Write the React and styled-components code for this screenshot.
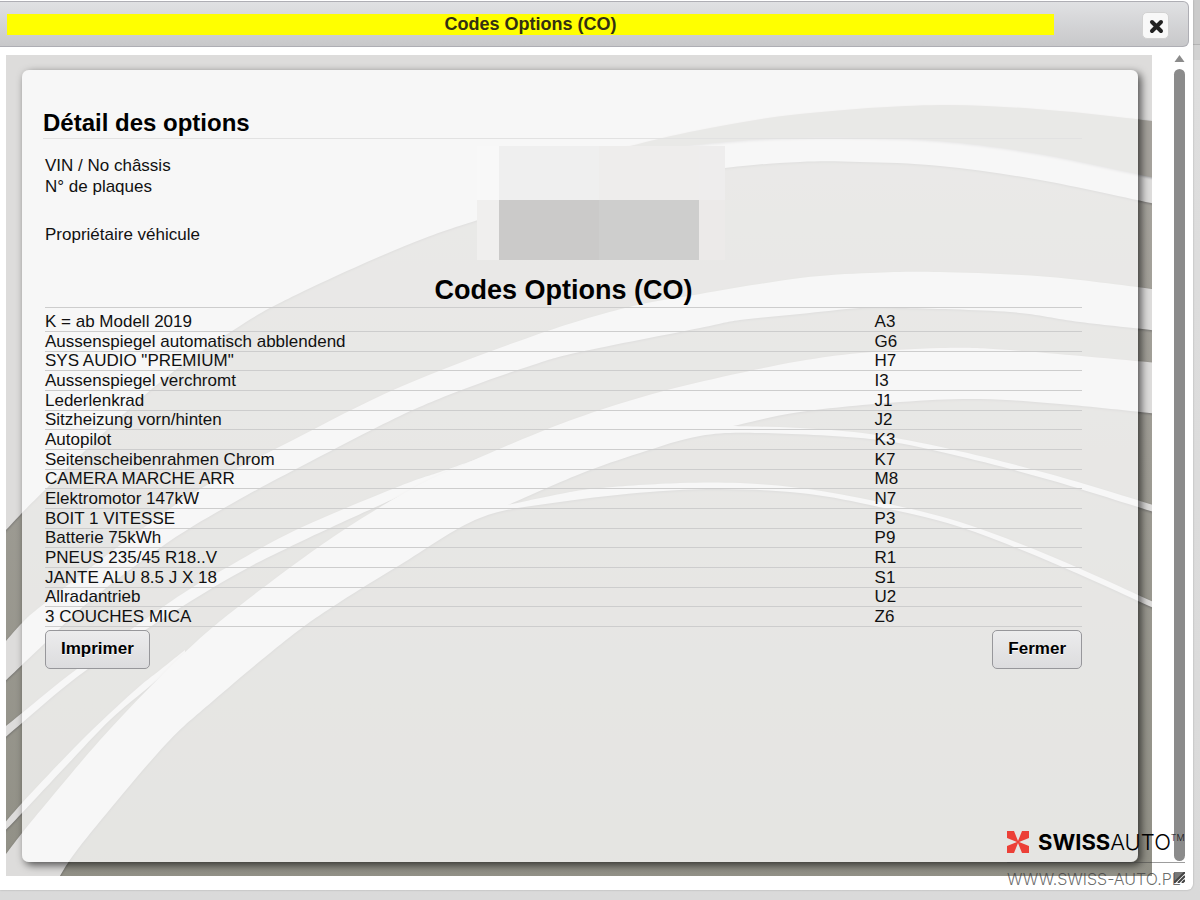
import React from 'react';
import styled, { createGlobalStyle } from 'styled-components';

const GlobalStyle = createGlobalStyle`
  * { box-sizing: border-box; }
  body {
    margin: 0;
    background: #dcdcdc;
    color: #111;
    font: 17px/21px "Liberation Sans", Arial, sans-serif;
  }
`;

const Page = styled.div`
  display: flex;
  flex-direction: column;
  min-height: 100vh;
  padding: 0 7px 10px 0;
  background: linear-gradient(#cbcbcb 44px, #b4b4b4 44px, #b4b4b4 45px, #d2d2d2 45px, #d2d2d2 60px, #dedede 60px, #dadada);
`;

const Dialog = styled.section`
  position: relative;
  display: flex;
  flex: 1;
  flex-direction: column;
  background: #fff;
  border-radius: 0 0 6px 0;
  box-shadow: 0 0 2px rgba(0, 0, 0, 0.25);
`;

const TitleBar = styled.header`
  display: flex;
  align-items: center;
  gap: 88px;
  height: 46px;
  margin: 1px 4px 0 0;
  padding: 0 19px 0 7px;
  border: solid #aeaeb4;
  border-width: 1px 1px 1px 0;
  border-radius: 0 6px 6px 0;
  background: linear-gradient(#e0e1e3, #c8c8ca);
`;

const DialogTitle = styled.h1`
  flex: 1;
  margin: 0;
  background: #ff0;
  color: #332f12;
  font-size: 18px;
  line-height: 21px;
  text-align: center;
`;

const CloseButton = styled.button`
  display: flex;
  align-items: center;
  justify-content: center;
  width: 27px;
  height: 27px;
  margin-top: 2px;
  padding: 2px 0 0 2px;
  border: 1px solid #d2d2d2;
  border-radius: 5px;
  background: #f8f8f8;
`;

const Body = styled.div`
  display: flex;
  flex: 1;
  gap: 22px;
  padding: 8px 8px 7px 6px;
`;

const Panel = styled.main`
  position: relative;
  display: flex;
  flex: 1;
  margin-bottom: 7px;
  padding: 15px 14px 14px 16px;
  overflow: hidden;
`;

const Waves = styled.svg`
  position: absolute;
  inset: 0;
  width: 100%;
  height: 100%;
`;

const Band = styled.path`
  fill: ${(p) => p.$fill || '#dddcdb'};
  filter: drop-shadow(0 1px 1px rgba(40, 40, 50, 0.35));
`;

const Card = styled.article`
  position: relative;
  flex: 1;
  padding: 38px 56px 20px 21px;
  border-radius: 7px;
  background: rgba(255, 255, 255, 0.76);
`;

const Heading = styled.h2`
  margin: 0;
  border-bottom: 1px solid #e2e2e2;
  color: #000;
  font-size: 24px;
  line-height: 30px;
`;

const Section = styled.div`
  padding-left: 2px;
`;

const Info = styled.div`
  display: grid;
  grid-template-columns: 5fr 7fr;
  margin-top: 7px;
`;

const Labels = styled.div`
  display: flex;
  flex-direction: column;
  padding-top: 9px;
`;

const Label = styled.span`
  margin-top: ${(p) => (p.$spaced ? '27px' : '0')};
`;

const Redacted = styled.div`
  display: grid;
  grid-template: 54px 60px / 22px 100px 100px 26px;
`;

const Block = styled.div`
  background: ${(p) => p.$tone};
`;

const TableTitle = styled.h2`
  margin: 15px 0 2px;
  color: #000;
  font-size: 27px;
  line-height: 30px;
  text-align: center;
`;

const Table = styled.table`
  width: 100%;
  border-top: 1px solid #cdcdcd;
  border-spacing: 0;
  table-layout: fixed;
`;

const Row = styled.tr`
  &:nth-child(3n) td { padding-top: 0; }
  &:first-child td { padding-top: 5px; }
`;

const Cell = styled.td`
  width: ${(p) => p.$width};
  padding: 1px 0 0;
  border-bottom: 1px solid #cdcdcd;
  line-height: 18px;
`;

const Actions = styled.div`
  display: flex;
  justify-content: space-between;
  padding-top: 3px;
`;

const Button = styled.button`
  height: 39px;
  padding: 0 15px 2px;
  border: 1px solid #97979b;
  border-radius: 5px;
  background: linear-gradient(#ececed, #dcdcde);
  color: #000;
  font: bold 17px/20px "Liberation Sans", Arial, sans-serif;
  text-shadow: 0 1px 0 #fff;
`;

const Scroller = styled.div`
  display: flex;
  flex-direction: column;
  width: 11px;
`;

const Thumb = styled.div`
  flex: 1;
  margin: 7px 0 11px;
  border-radius: 6px;
  background: #8b8b8b;
`;

const Brand = styled.aside`
  position: absolute;
  right: 8px;
  bottom: 0;
  width: 178px;
`;

const BrandTop = styled.div`
  display: flex;
  align-items: center;
  height: 42px;
  border-bottom: 1px solid rgba(60, 60, 60, 0.5);
`;

const BrandName = styled.span`
  margin-left: 9px;
  color: #000;
  font: 300 22px/22px Inter, sans-serif;
  white-space: nowrap;
`;

const Strong = styled.b`
  font-weight: 700;
`;

const Mark = styled.span`
  align-self: flex-start;
  margin-top: 12px;
  font: 300 9px/10px Inter, sans-serif;
`;

const BrandLink = styled.a`
  display: block;
  height: 27px;
  padding-top: 6px;
  color: rgba(60, 60, 60, 0.75);
  font: 300 16px/20px Inter, sans-serif;
  text-decoration: none;
  white-space: nowrap;
`;

const OPTIONS = [
  ['K = ab Modell 2019', 'A3'],
  ['Aussenspiegel automatisch abblendend', 'G6'],
  ['SYS AUDIO "PREMIUM"', 'H7'],
  ['Aussenspiegel verchromt', 'I3'],
  ['Lederlenkrad', 'J1'],
  ['Sitzheizung vorn/hinten', 'J2'],
  ['Autopilot', 'K3'],
  ['Seitenscheibenrahmen Chrom', 'K7'],
  ['CAMERA MARCHE ARR', 'M8'],
  ['Elektromotor 147kW', 'N7'],
  ['BOIT 1 VITESSE', 'P3'],
  ['Batterie 75kWh', 'P9'],
  ['PNEUS 235/45 R18..V', 'R1'],
  ['JANTE ALU 8.5 J X 18', 'S1'],
  ['Allradantrieb', 'U2'],
  ['3 COUCHES MICA', 'Z6'],
];

// Smooth curve through the points, as cubic segments.
const curve = (pts) =>
  pts.slice(1).map((p, i) => {
    const a = pts[i];
    const before = pts[i - 1] || a;
    const after = pts[i + 2] || p;
    const c1 = [a[0] + (p[0] - before[0]) / 6, a[1] + (p[1] - before[1]) / 6];
    const c2 = [p[0] - (after[0] - a[0]) / 6, p[1] - (after[1] - a[1]) / 6];
    return `C${c1} ${c2} ${p}`;
  }).join('');

const shape = (...edges) =>
  edges.map((e, i) => `${i ? 'L' : 'M'}${e[0]}${curve(e)}`).join('') + 'Z';

const SKY = shape(
  [[0, 536], [6, 530], [45, 490], [153, 388], [240, 326], [300, 293], [400, 248], [478, 220], [600, 185], [725, 168], [800, 162], [860, 162], [940, 166], [1040, 180], [1160, 205]],
  [[1160, 50], [0, 50]],
);
const CRESCENT = shape(
  [[600, 154], [630, 146], [700, 130], [800, 114], [940, 105], [1060, 111], [1160, 122]],
  [[1160, 179], [1040, 154], [940, 141], [860, 138], [800, 138], [725, 142], [600, 156]],
);
const BANDS = [
  shape(
    [[0, 648], [22, 623], [45, 603], [127, 540], [200, 489], [293, 440], [400, 387], [533, 336], [625, 308], [700, 294], [800, 278], [870, 273], [940, 272], [1050, 277], [1160, 290]],
    [[1160, 331], [1080, 322], [1010, 312], [900, 308], [860, 308], [800, 314], [740, 320], [700, 328], [580, 352], [533, 365], [467, 388], [400, 416], [300, 467], [233, 503], [167, 543], [90, 601], [43, 645], [22, 665], [0, 686]],
  ),
  shape(
    [[0, 731], [22, 713], [77, 669], [173, 600], [233, 564], [300, 528], [400, 486], [440, 472], [480, 458]],
    [[480, 462], [430, 483], [400, 496], [300, 542], [233, 576], [150, 627], [77, 677], [22, 723], [0, 742]],
  ),
  shape(
    [[0, 829], [22, 803], [80, 742], [133, 692], [160, 670], [185, 650]],
    [[185, 656], [150, 686], [110, 720], [67, 765], [22, 813], [0, 836]],
  ),
  shape(
    [[0, 862], [22, 833], [50, 799], [100, 740], [150, 687], [197, 641], [247, 600], [333, 537], [413, 488], [467, 463], [540, 432], [600, 410], [667, 390], [740, 373], [800, 361], [860, 353], [940, 348], [1010, 350], [1160, 363]],
    [[1160, 414], [1060, 404], [980, 399], [900, 402], [800, 412], [733, 426]],
    [[733, 426], [800, 428], [870, 434], [950, 449], [1050, 474], [1160, 507]],
    [[1160, 514], [1050, 480], [950, 454], [870, 439], [760, 433], [700, 436], [640, 453], [580, 474], [508, 505]],
    [[508, 505], [560, 494], [600, 488], [680, 483], [740, 483], [800, 488], [870, 500], [960, 522], [1060, 560], [1160, 605]],
    [[1160, 611], [1060, 566], [960, 527], [870, 505], [800, 493], [720, 489], [650, 492], [560, 502], [480, 518], [400, 565], [340, 602], [290, 637], [213, 701], [167, 743], [107, 813], [72, 857], [55, 885]],
    [[0, 885], [0, 870]],
  ),
];

const CARD_EDGE = 'M29 70H1131Q1138 70 1138 77V855Q1138 862 1131 862H29Q22 862 22 855V77Q22 70 29 70Z';

function Background() {
  return (
    <Waves viewBox="6 55 1146 821" preserveAspectRatio="none" aria-hidden="true">
      <defs>
        <linearGradient id="base" x1="0" y1="0" x2="0" y2="1">
          <stop offset="0" stopColor="#aaa7a1" />
          <stop offset="1" stopColor="#919086" />
        </linearGradient>
        <filter id="soft" x="-5%" y="-5%" width="110%" height="110%">
          <feGaussianBlur stdDeviation="4" />
        </filter>
        {/* The card is translucent, so its shadow is kept to the area around it. */}
        <clipPath id="outside">
          <path clipRule="evenodd" d={`M0 50H1160V885H0Z${CARD_EDGE}`} />
        </clipPath>
      </defs>
      <rect x="0" y="50" width="1160" height="835" fill="url(#base)" />
      <Band d={SKY} />
      <Band d={CRESCENT} $fill="#a5a29c" />
      {BANDS.map((d) => <Band key={d} d={d} />)}
      <g clipPath="url(#outside)">
        <path d={CARD_EDGE} transform="translate(3 3)" filter="url(#soft)" fillOpacity="0.65" />
      </g>
    </Waves>
  );
}

export default function App() {
  return (
    <Page>
      <GlobalStyle />
      <Dialog role="dialog" aria-labelledby="dialog-title">
        <TitleBar>
          <DialogTitle id="dialog-title">Codes Options (CO)</DialogTitle>
          <CloseButton type="button" aria-label="Fermer la fenêtre">
            <svg width="15" height="15" viewBox="0 0 15 15">
              <path d="M3 3L12 12M12 3L3 12" stroke="#222" strokeWidth="4" strokeLinecap="round" />
            </svg>
          </CloseButton>
        </TitleBar>
        <Body>
          <Panel>
            <Background />
            <Card>
              <Heading>Détail des options</Heading>
              <Section>
                <Info>
                  <Labels>
                    <Label>VIN / No châssis</Label>
                    <Label>N° de plaques</Label>
                    <Label $spaced>Propriétaire véhicule</Label>
                  </Labels>
                  <Redacted>
                    <Block $tone="#f8f8f8" />
                    <Block $tone="#efefef" />
                    <Block $tone="#eeedec" />
                    <Block $tone="#eeeded" />
                    <Block $tone="#f0efee" />
                    <Block $tone="#cbcac9" />
                    <Block $tone="#cececd" />
                    <Block $tone="#eceae9" />
                  </Redacted>
                </Info>
                <TableTitle id="table-title">Codes Options (CO)</TableTitle>
                <Table aria-labelledby="table-title">
                  <tbody>
                    {OPTIONS.map(([name, code]) => (
                      <Row key={code}>
                        <Cell $width="80%">{name}</Cell>
                        <Cell $width="20%">{code}</Cell>
                      </Row>
                    ))}
                  </tbody>
                </Table>
                <Actions>
                  <Button type="button">Imprimer</Button>
                  <Button type="button">Fermer</Button>
                </Actions>
              </Section>
            </Card>
          </Panel>
          <Scroller aria-hidden="true">
            <svg width="11" height="7" viewBox="0 0 11 7">
              <path d="M5.5 0L10.5 7H.5Z" fill="#8b8b8b" />
            </svg>
            <Thumb />
            <svg width="11" height="11" viewBox="0 0 11 11">
              <path d="M0 0H11L0 11Z" fill="#777" />
              <path d="M0 11L11 0M4 11L11 4M8 11L11 8" stroke="#444" strokeWidth="2" />
            </svg>
          </Scroller>
        </Body>
        <Brand>
          <BrandTop>
            <svg width="22" height="22" viewBox="0 0 22 22" aria-hidden="true">
              <path d="M0 0H7L11 10L15 0H22V7L12 11L22 15V22H15L11 12L7 22H0V15L10 11L0 7Z" fill="#ec4037" />
            </svg>
            <BrandName><Strong>SWISS</Strong>AUTO</BrandName>
            <Mark>TM</Mark>
          </BrandTop>
          <BrandLink href="#">WWW.SWISS-AUTO.PL</BrandLink>
        </Brand>
      </Dialog>
    </Page>
  );
}
